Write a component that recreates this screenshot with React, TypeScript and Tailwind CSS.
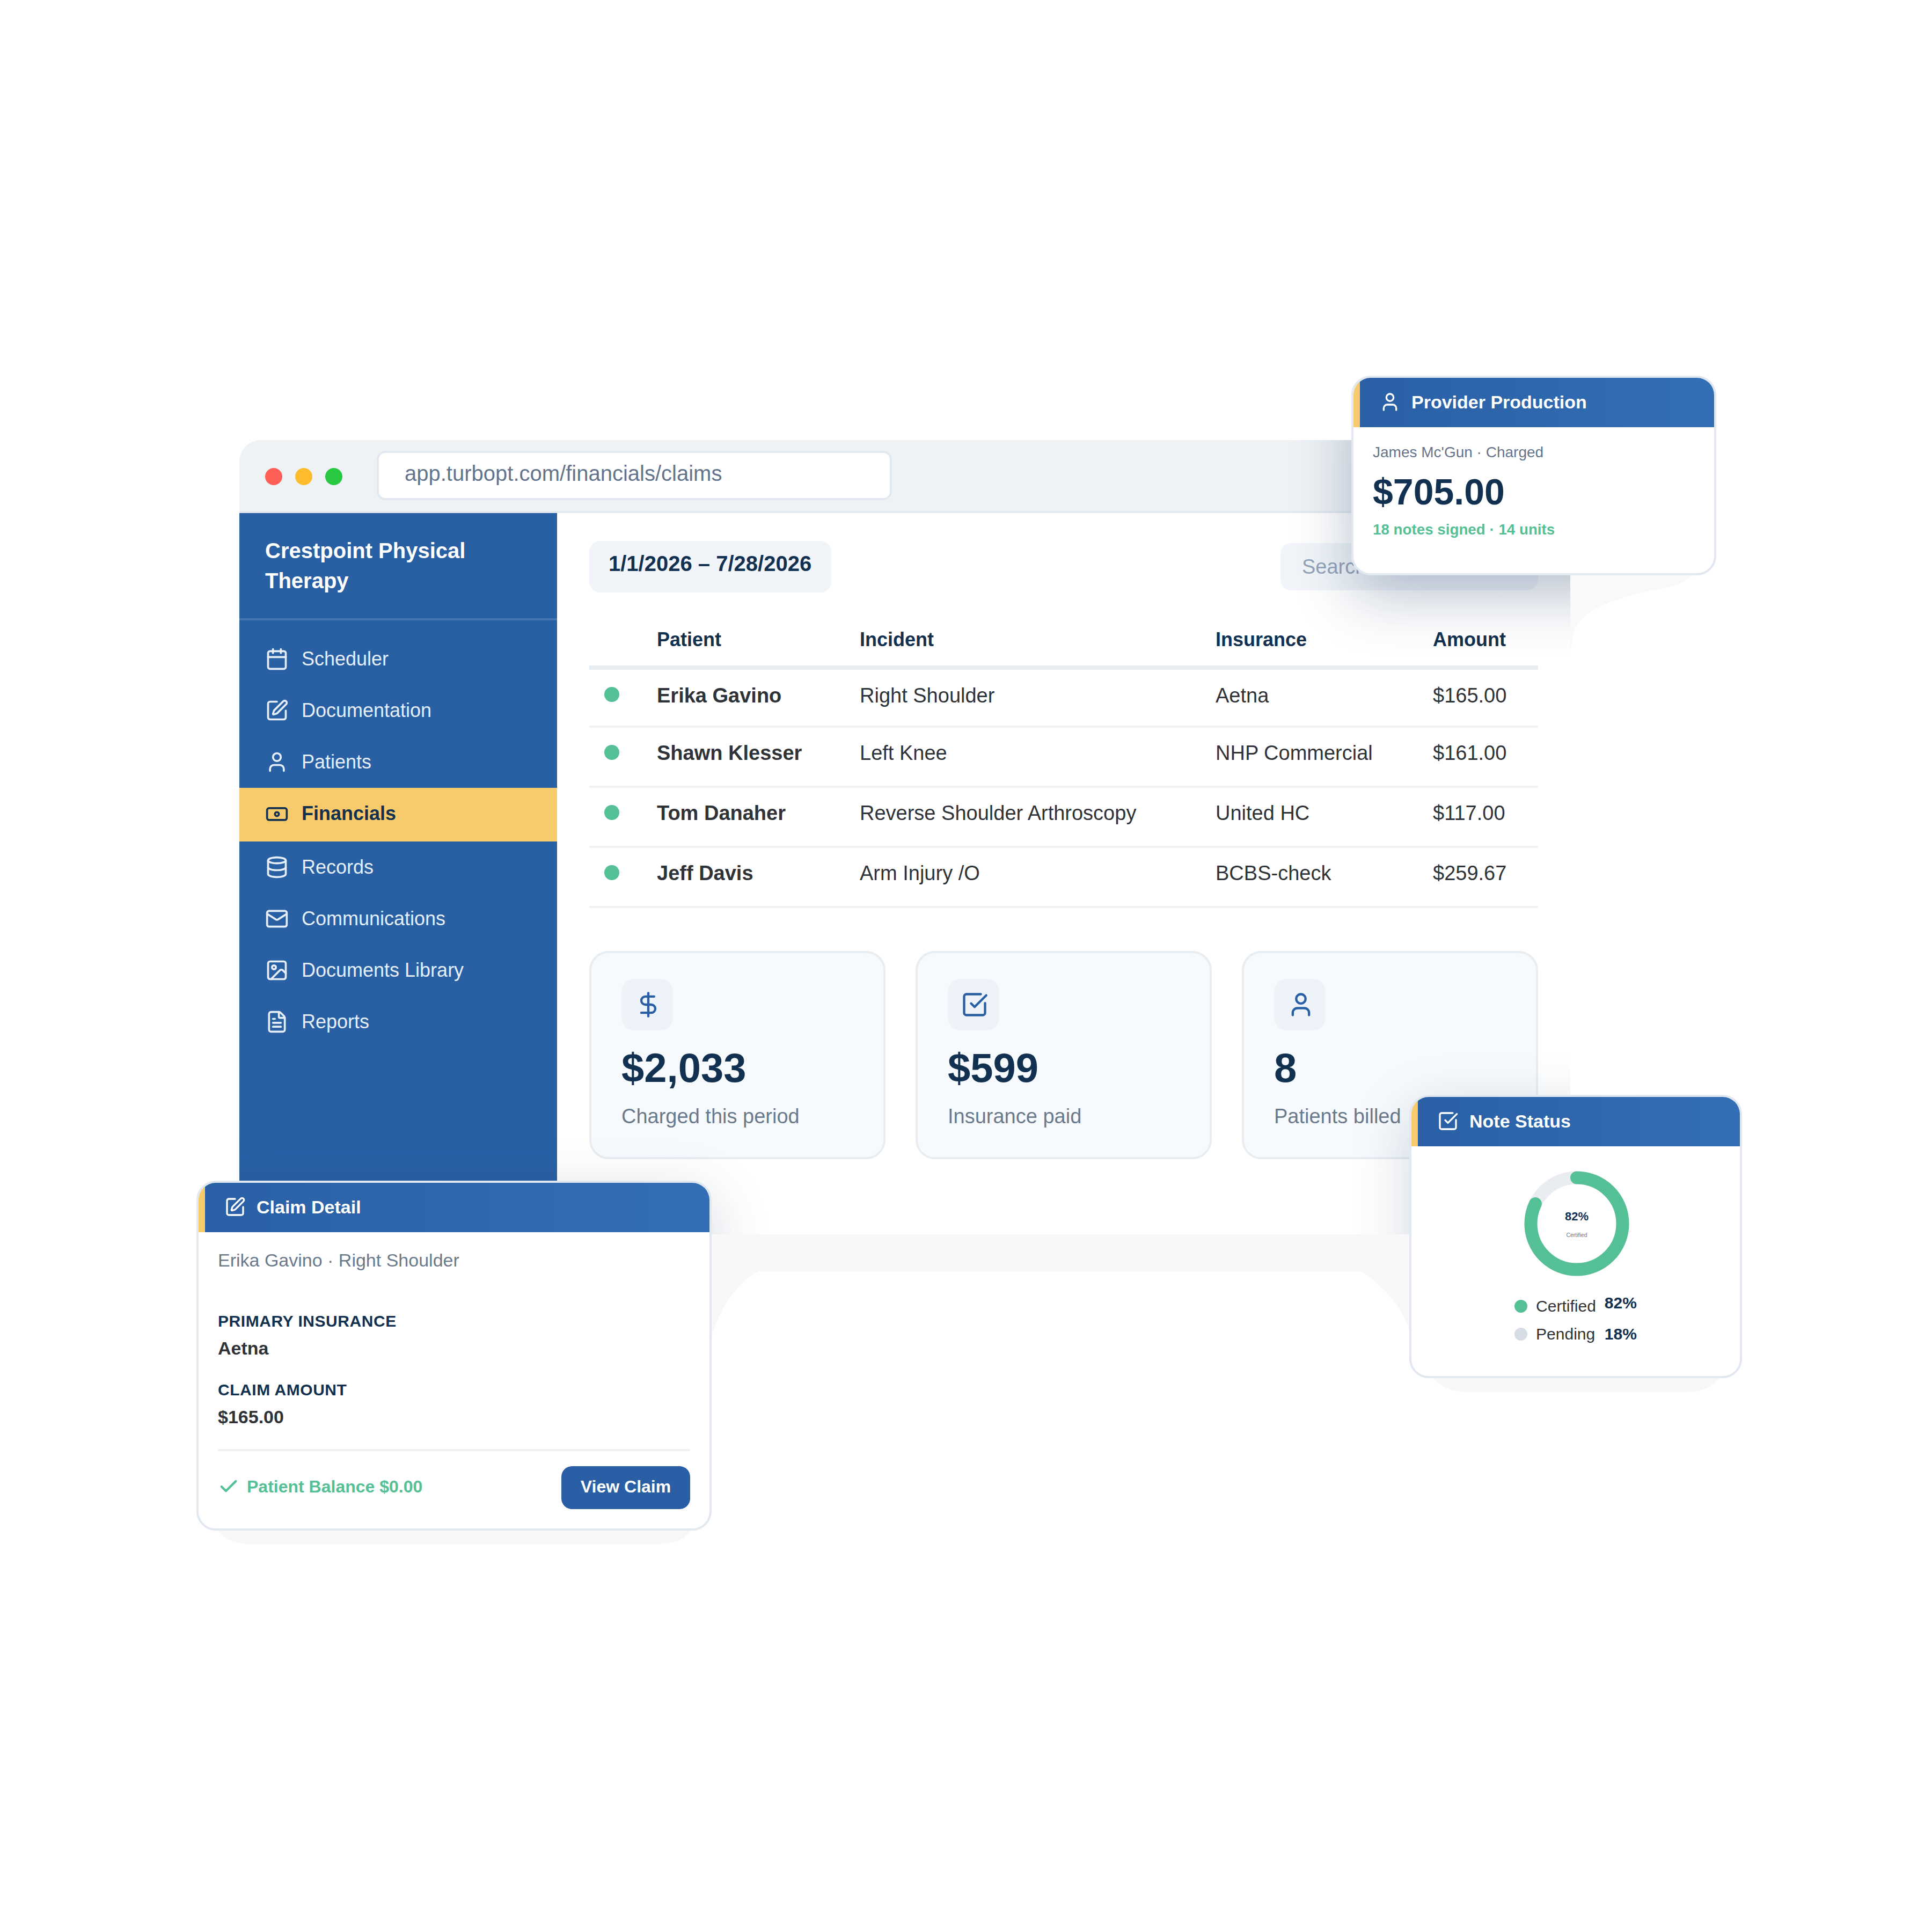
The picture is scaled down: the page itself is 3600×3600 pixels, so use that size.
import type { ReactNode } from 'react';
import {
  Calendar,
  Check,
  Database,
  DollarSign,
  FileText,
  Image,
  Mail,
  SquareCheckBig,
  SquarePen,
  User,
} from 'lucide-react';

function MoneyIcon({ className }: { className?: string }) {
  return (
    <svg viewBox="0 0 24 24" fill="none" stroke="currentColor" strokeWidth={2} className={className}>
      <rect x="2" y="6.5" width="20" height="12" rx="2" />
      <circle cx="12" cy="12.5" r="2" />
    </svg>
  );
}

const NAV_ITEMS = [
  { label: 'Scheduler', icon: Calendar },
  { label: 'Documentation', icon: SquarePen },
  { label: 'Patients', icon: User },
  { label: 'Financials', icon: MoneyIcon, active: true },
  { label: 'Records', icon: Database },
  { label: 'Communications', icon: Mail },
  { label: 'Documents Library', icon: Image },
  { label: 'Reports', icon: FileText },
];

const ROWS = [
  { patient: 'Erika Gavino', incident: 'Right Shoulder', insurance: 'Aetna', amount: '$165.00' },
  { patient: 'Shawn Klesser', incident: 'Left Knee', insurance: 'NHP Commercial', amount: '$161.00' },
  { patient: 'Tom Danaher', incident: 'Reverse Shoulder Arthroscopy', insurance: 'United HC', amount: '$117.00' },
  { patient: 'Jeff Davis', incident: 'Arm Injury /O', insurance: 'BCBS-check', amount: '$259.67' },
];

const STATS = [
  { value: '$2,033', label: 'Charged this period', icon: DollarSign },
  { value: '$599', label: 'Insurance paid', icon: SquareCheckBig },
  { value: '8', label: 'Patients billed', icon: User },
];

const TABLE_COLUMNS = 'grid grid-cols-[126px_378px_663px_405px_196px]';

function Sidebar() {
  return (
    <aside className="w-[592px] shrink-0 bg-[#2960a4]">
      <div className="h-[200px] border-b-4 border-[#4474b2] px-12 pt-[42px] text-[40px] leading-[56px] font-bold text-white">
        Crestpoint Physical
        <br />
        Therapy
      </div>
      <nav className="pt-6">
        {NAV_ITEMS.map(item => (
          <div
            key={item.label}
            className={
              item.active
                ? 'flex h-[100px] items-center gap-6 bg-[#f7ca6b] px-12 pb-1 text-[36px] font-bold text-[#12304f]'
                : 'flex h-[96px] items-center gap-6 px-12 text-[36px] text-[#e6eef8]'
            }
          >
            <item.icon className="size-[44px] shrink-0" />
            {item.label}
          </div>
        ))}
      </nav>
    </aside>
  );
}

function ClaimsTable() {
  return (
    <div className="mt-10 text-[38px] text-[#2f3338]">
      <div className={`${TABLE_COLUMNS} h-[104px] items-center border-b-8 border-[#e8edf2] text-[36px] font-bold text-[#12304f]`}>
        <span />
        <span>Patient</span>
        <span>Incident</span>
        <span>Insurance</span>
        <span>Amount</span>
      </div>
      {ROWS.map((row, index) => (
        <div
          key={row.patient}
          className={`${TABLE_COLUMNS} items-center border-b-4 border-[#f0f3f6] ${index === 0 ? 'h-[108px] pb-2' : 'h-[112px] pb-[13px]'}`}
        >
          <span className="mb-1 ml-[28px] size-[28px] rounded-full bg-[#55bf95]" />
          <span className="font-bold">{row.patient}</span>
          <span>{row.incident}</span>
          <span>{row.insurance}</span>
          <span>{row.amount}</span>
        </div>
      ))}
    </div>
  );
}

function StatCards() {
  return (
    <div className="mt-20 grid grid-cols-3 gap-14">
      {STATS.map(stat => (
        <div key={stat.label} className="h-[388px] rounded-[36px] border-4 border-[#e8edf2] bg-[#f7fafd] pt-12 pl-14">
          <div className="flex size-[96px] items-center justify-center rounded-3xl bg-[#edf3f9] text-[#2a5fa5]">
            <stat.icon className="ml-1 size-[52px]" />
          </div>
          <div className="mt-6 text-[76px] leading-[92px] font-bold text-[#12304f]">{stat.value}</div>
          <div className="mt-[18px] text-[38px] leading-[52px] text-[#6b7a8a]">{stat.label}</div>
        </div>
      ))}
    </div>
  );
}

function FloatCard({
  title,
  icon,
  className,
  children,
}: {
  title: string;
  icon: ReactNode;
  className: string;
  children: ReactNode;
}) {
  return (
    <div className={`absolute overflow-hidden rounded-[36px] border-4 border-[#e2e8f0] bg-white ${className}`}>
      <div className="flex h-[92px] items-center gap-5 border-l-[12px] border-[#f7ca6b] bg-linear-to-r from-[#2a5fa5] to-[#336fb5] pb-0.5 pl-9 text-[34px] font-bold text-white">
        {icon}
        {title}
      </div>
      {children}
    </div>
  );
}

function DonutChart() {
  return (
    <svg viewBox="0 0 200 200" className="ml-[208px] size-[200px]">
      <circle cx="100" cy="100" r="85.5" fill="none" stroke="#e9edf1" strokeWidth="24" />
      <circle
        cx="100"
        cy="100"
        r="85.5"
        fill="none"
        stroke="#55bf95"
        strokeWidth="24"
        strokeLinecap="round"
        strokeDasharray="440.5 537.2"
        transform="rotate(-90 100 100)"
      />
      <text x="100" y="94" textAnchor="middle" fontSize="22" fontWeight="700" fill="#12304f">
        82%
      </text>
      <text x="100" y="125" textAnchor="middle" fontSize="10.5" fill="#6b7a8a">
        Certified
      </text>
    </svg>
  );
}

// the pale ground shadows outside the window, they have hard edges in the picture
function GroundShadows() {
  return (
    <svg viewBox="0 0 3600 3600" className="absolute inset-0 size-full">
      <path
        fill="#f8f8f8"
        d="M1326 2300 H2627 V2480 C2610 2430 2580 2400 2537 2369 H1414 C1375 2390 1345 2430 1326 2490 Z"
      />
      <path
        fill="#f9f9f9"
        d="M2926 1072 H3154 C3140 1085 3125 1090 3110 1093 C3060 1105 3030 1110 2997 1123 C2970 1135 2955 1145 2941 1160 C2932 1175 2928 1195 2926 1220 Z"
      />
      <path fill="#f7f8f9" d="M406 2852 C420 2870 440 2877 470 2877 H1225 C1255 2877 1275 2870 1288 2852 Z" />
      <path fill="#f7f8f9" d="M2669 2567 C2685 2585 2705 2594 2735 2594 H3140 C3170 2594 3190 2585 3205 2567 Z" />
    </svg>
  );
}

export default function App() {
  return (
    <div className="relative h-[3600px] w-[3600px] overflow-hidden bg-white pt-[820px] pl-[446px] font-['Liberation_Sans',Arial,sans-serif]">
      <GroundShadows />
      {/* browser window */}
      <div className="relative h-[1480px] w-[2480px] rounded-[40px] bg-white">
        <div className="flex h-[136px] items-center gap-6 rounded-t-[40px] border-b-4 border-[#e4e9ef] bg-[#eef2f5] pl-12">
          <span className="mt-1 size-8 rounded-full bg-[#ff5f57]" />
          <span className="mt-1 size-8 rounded-full bg-[#febc2e]" />
          <span className="mt-1 size-8 rounded-full bg-[#28c840]" />
          <div className="ml-10 flex h-[92px] w-[960px] items-center rounded-2xl border-4 border-[#e2e8f0] bg-white pb-2 pl-12 text-[40px] text-[#64748b]">
            app.turbopt.com/financials/claims
          </div>
        </div>
        <div className="flex h-[1344px]">
          <Sidebar />
          <main className="flex-1 px-[60px] pt-[52px]">
            <div className="flex items-center justify-between">
              <div className="h-[96px] rounded-[20px] bg-[#f1f5f9] pt-[14px] pr-[37px] pl-9 text-[40px] leading-[56px] font-bold text-[#12304f]">
                1/1/2026 – 7/28/2026
              </div>
              <div className="flex h-[88px] w-[480px] items-center rounded-[20px] bg-[#f1f5f9] pl-10 text-[38px] text-[#94a3b8]">
                Search claims
              </div>
            </div>
            <ClaimsTable />
            <StatCards />
          </main>
        </div>
        {/* shadows of the floating cards, only this strong over the window */}
        <div className="pointer-events-none absolute inset-0 overflow-hidden rounded-[40px]">
          <div className="absolute top-[-120px] left-[2072px] h-[372px] w-[680px] rounded-[36px] shadow-[0_36px_110px_rgba(30,60,100,0.32)]" />
          <div className="absolute top-[1220px] left-[2180px] h-[528px] w-[620px] rounded-[36px] shadow-[0_30px_110px_rgba(30,60,100,0.2)]" />
          <div className="absolute top-[1380px] left-[-80px] h-[652px] w-[960px] rounded-[36px] shadow-[0_30px_110px_rgba(30,60,100,0.2)]" />
        </div>
      </div>

      <FloatCard
        title="Provider Production"
        icon={<User className="size-10 shrink-0" />}
        className="top-[700px] left-[2518px] h-[372px] w-[680px]"
      >
        <div className="pt-[27px] pl-9">
          <div className="text-[28px] leading-10 text-[#64748b]">James Mc'Gun · Charged</div>
          <div className="mt-[13px] text-[68px] leading-[80px] font-bold text-[#12304f]">$705.00</div>
          <div className="mt-[13px] text-[27.75px] leading-9 font-bold text-[#55bf95]">18 notes signed · 14 units</div>
        </div>
      </FloatCard>

      <FloatCard
        title="Note Status"
        icon={<SquareCheckBig className="size-10 shrink-0" />}
        className="top-[2040px] left-[2626px] h-[528px] w-[620px]"
      >
        <div className="pt-[44px]">
          <DonutChart />
          <div className="mt-7 grid auto-rows-[52px] grid-cols-[24px_auto_auto] items-center justify-center gap-x-4 text-[30px] leading-[52px] text-[#2f3338]">
            <span className="size-6 rounded-full bg-[#55bf95]" />
            <span>Certified</span>
            <span className="mb-3 font-bold text-[#12304f]">82%</span>
            <span className="size-6 rounded-full bg-[#d6dde5]" />
            <span>Pending</span>
            <span className="font-bold text-[#12304f]">18%</span>
          </div>
        </div>
      </FloatCard>

      <FloatCard
        title="Claim Detail"
        icon={<SquarePen className="size-10 shrink-0" />}
        className="top-[2200px] left-[366px] h-[652px] w-[960px]"
      >
        <div className="px-9 pt-7">
          <div className="text-[34px] leading-[48px] text-[#6b7a8a]">Erika Gavino · Right Shoulder</div>
          <div className="mt-[70px] text-[30px] leading-10 font-bold tracking-[0.55px] text-[#12304f]">PRIMARY INSURANCE</div>
          <div className="mt-[6px] text-[34px] leading-[48px] font-bold text-[#2f3338]">Aetna</div>
          <div className="mt-[34px] text-[30px] leading-10 font-bold tracking-[0.55px] text-[#12304f]">CLAIM AMOUNT</div>
          <div className="mt-[6px] text-[34px] leading-[48px] font-bold text-[#2f3338]">$165.00</div>
          <div className="mt-9 flex items-center justify-between border-t-4 border-[#eef1f4] pt-7">
            <div className="flex items-center gap-[14px] pb-1 text-[32px] font-bold text-[#55bf95]">
              <Check className="size-10" strokeWidth={2.5} />
              Patient Balance $0.00
            </div>
            <div className="flex h-[80px] w-[240px] items-center justify-center rounded-[20px] bg-[#2a5fa5] pb-1 text-[32px] font-bold text-white">
              View Claim
            </div>
          </div>
        </div>
      </FloatCard>
    </div>
  );
}
